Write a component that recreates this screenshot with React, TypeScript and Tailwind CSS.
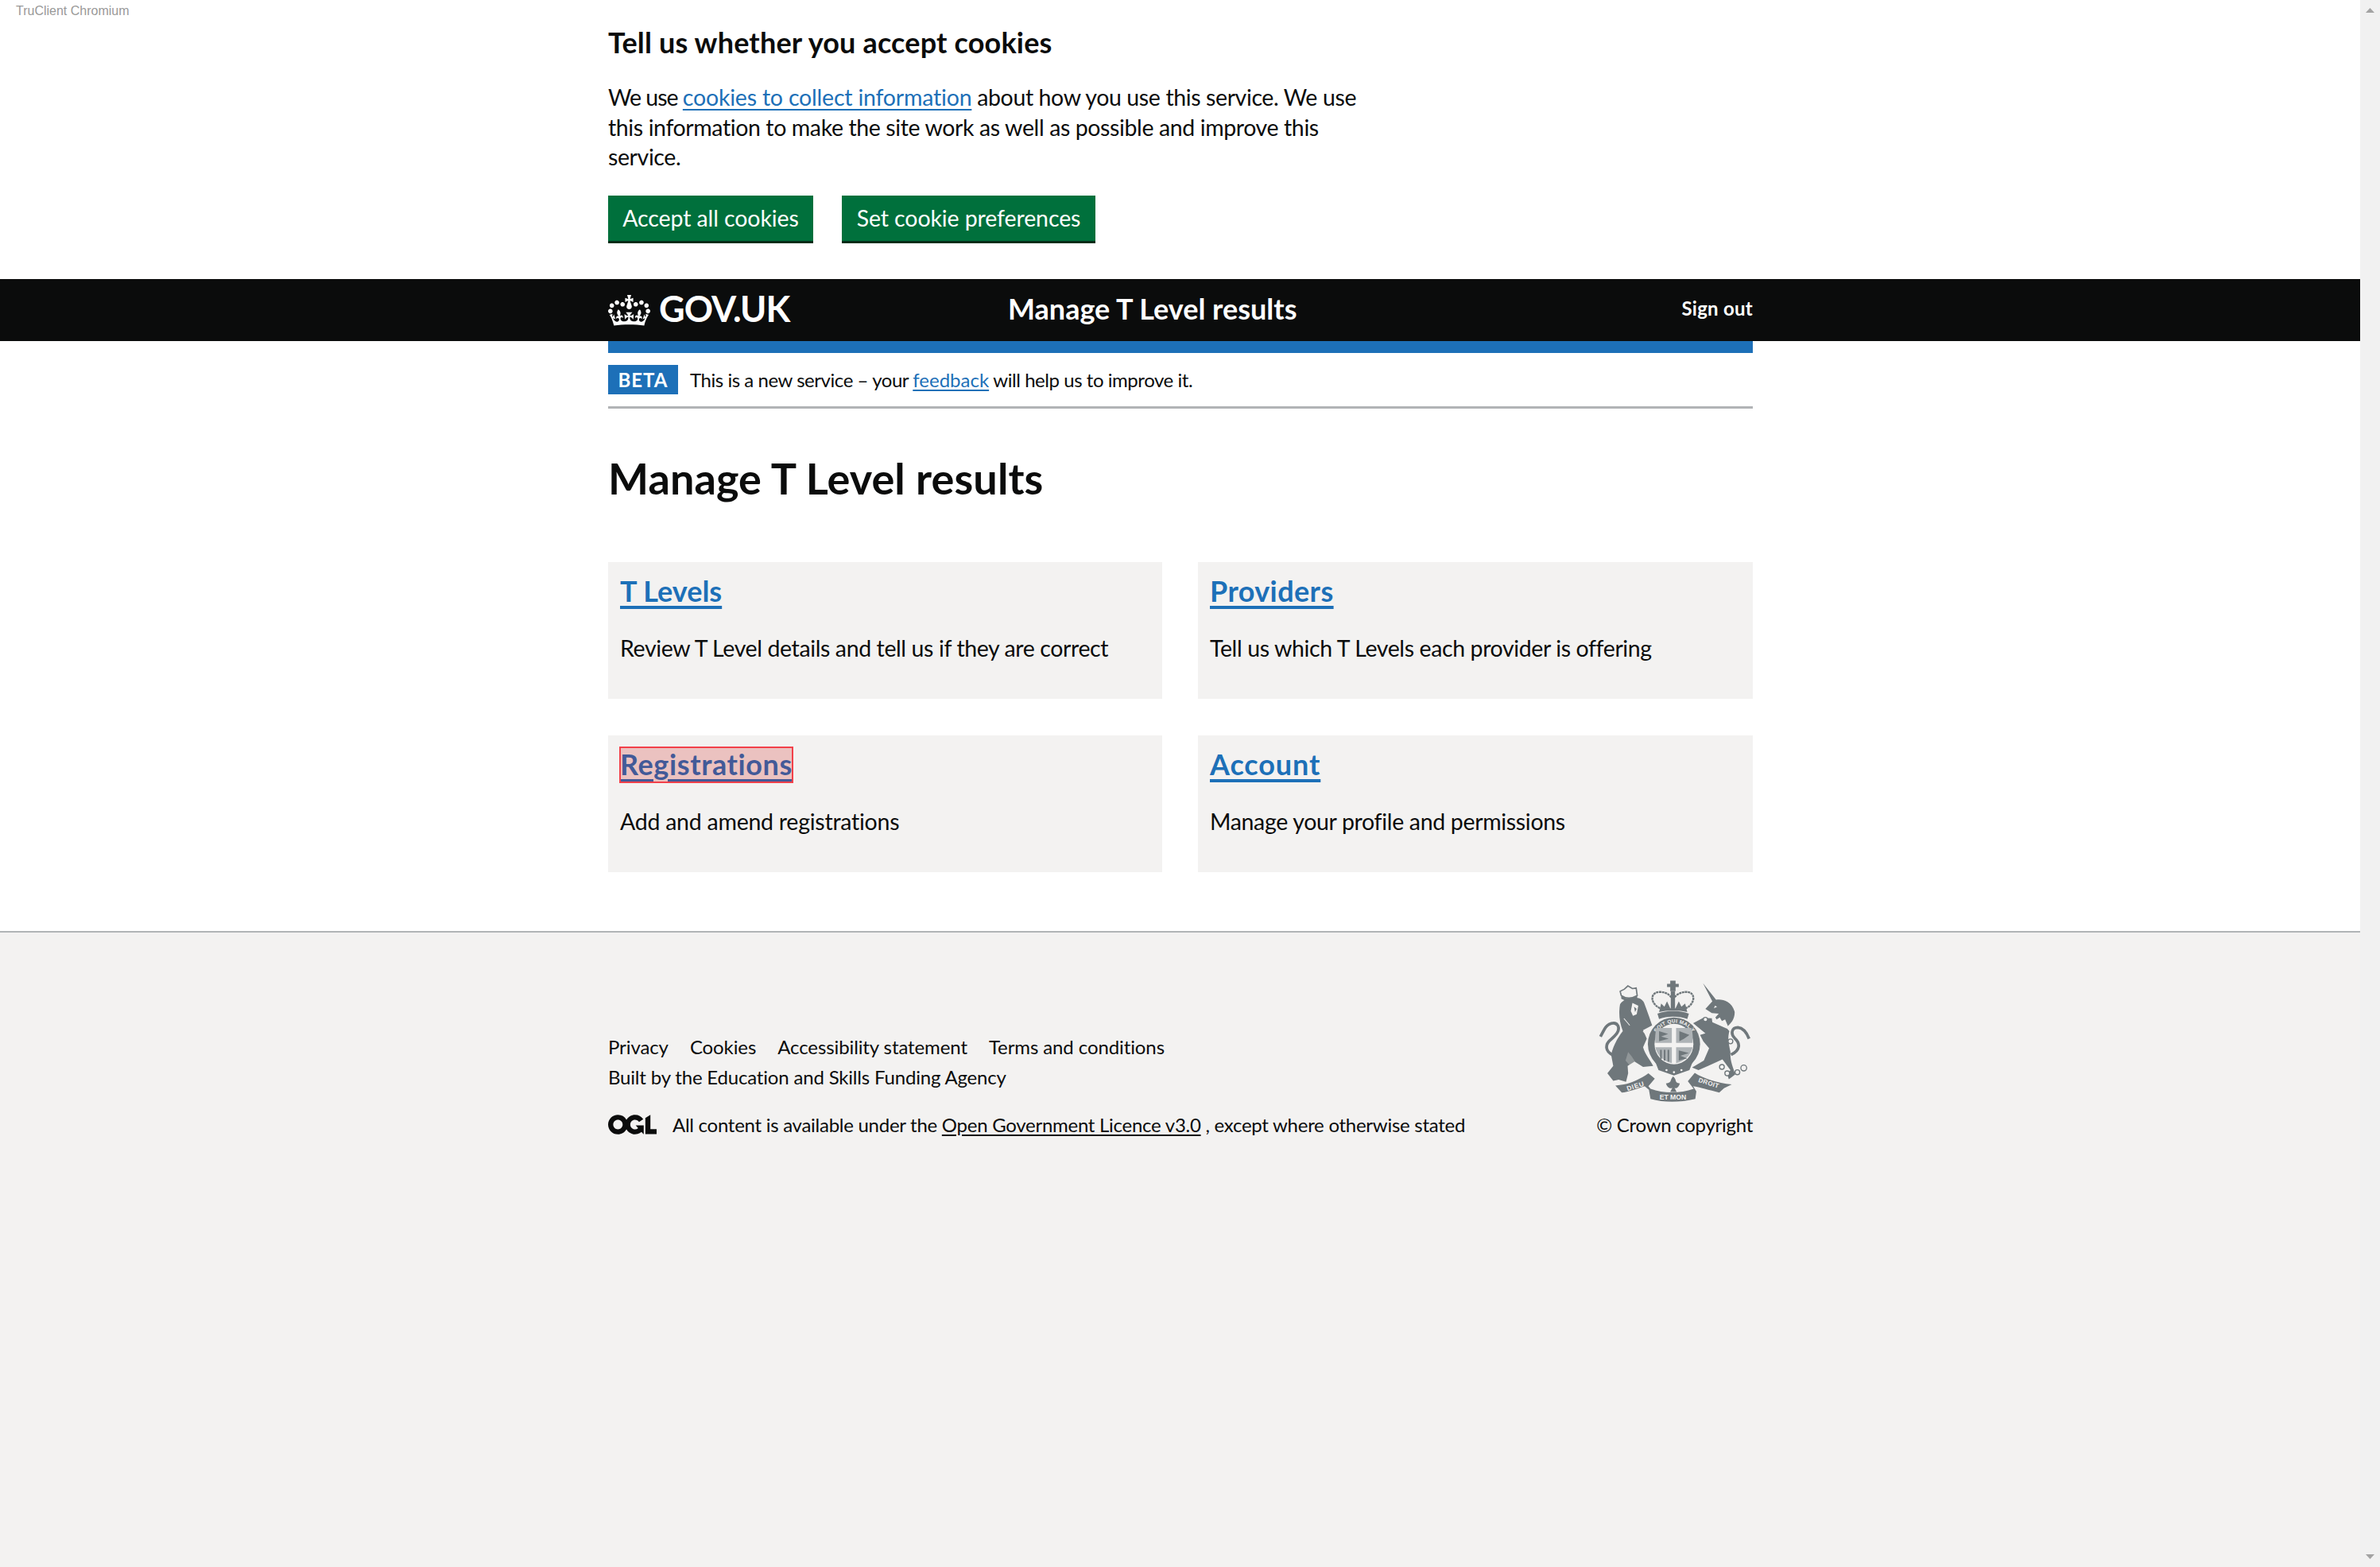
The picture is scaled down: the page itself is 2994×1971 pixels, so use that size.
import React from "react";

const sans = "font-['Lato','Noto_Sans',sans-serif]";

function Crown({ className }: { className?: string }) {
  return (
    <svg viewBox="0 0 132 97" className={className} fill="currentColor">
      <path fillRule="evenodd" d="M25 30.2c3.5 1.5 7.7-.2 9.1-3.7 1.5-3.6-.2-7.8-3.9-9.2-3.6-1.4-7.6.3-9.1 3.9-1.4 3.5.3 7.5 3.9 9zM9 39.5c3.6 1.5 7.8-.2 9.2-3.7 1.5-3.6-.2-7.8-3.9-9.1-3.6-1.5-7.6.2-9.1 3.8-1.4 3.5.3 7.5 3.8 9zM4.4 57.2c3.5 1.5 7.7-.2 9.1-3.8 1.5-3.6-.2-7.7-3.9-9.1-3.5-1.5-7.6.3-9.1 3.8-1.4 3.5.3 7.6 3.9 9.1zm38.3-21.4c3.5 1.5 7.7-.2 9.1-3.8 1.5-3.6-.2-7.7-3.9-9.1-3.6-1.5-7.6.3-9.1 3.8-1.3 3.6.4 7.7 3.9 9.1zm64.4-5.6c-3.6 1.5-7.8-.2-9.1-3.7-1.5-3.6.2-7.8 3.8-9.2 3.6-1.4 7.7.3 9.2 3.9 1.3 3.5-.4 7.5-3.9 9zm15.9 9.3c-3.6 1.5-7.7-.2-9.1-3.7-1.5-3.6.2-7.8 3.7-9.1 3.6-1.5 7.7.2 9.2 3.8 1.5 3.5-.3 7.5-3.8 9zm4.7 17.7c-3.6 1.5-7.8-.2-9.2-3.8-1.5-3.6.2-7.7 3.9-9.1 3.6-1.5 7.7.3 9.2 3.8 1.3 3.5-.4 7.6-3.9 9.1zM89.3 35.8c-3.6 1.5-7.8-.2-9.2-3.8-1.4-3.6.2-7.7 3.9-9.1 3.6-1.5 7.7.3 9.2 3.8 1.4 3.6-.3 7.7-3.9 9.1zM69.7 17.7l8.9 4.7V9.3l-8.9 2.8c-.2-.3-.5-.6-.9-.9L72.4 0H59.6l3.5 11.2c-.3.3-.6.5-.9.9l-8.8-2.8v13.1l8.8-4.7c.3.3.6.7.9.9l-5 15.4v.1c-.2.8-.4 1.6-.4 2.4 0 4.1 3.1 7.5 7 8.1h.2c.3 0 .7.1 1 .1.4 0 .7 0 1-.1h.2c4-.6 7.1-4.1 7.1-8.1 0-.8-.1-1.7-.4-2.4V34l-5.1-15.4c.4-.2.7-.6 1-.9zM66 92.8c16.9 0 32.8 1.1 47.1 3.2 4-16.9 8.9-26.7 14-33.5l-9.6-3.4c1 4.9 1.1 7.2 0 10.2-1.5-1.4-3-4.3-4.2-8.7L108.6 76c2.8-2 5-3.2 7.5-3.3-4.4 9.4-10 11.9-13.6 11.2-4.3-.8-6.3-4.6-5.6-7.9 1-4.7 5.7-5.9 8-.5 4.3-8.7-3-11.4-7.6-8.8 7.1-7.2 7.9-13.5 2.1-21.1-8 6.1-8.1 12.3-4.5 20.8-4.7-5.4-12.1-2.5-9.5 6.2 3.4-5.2 7.9-2 7.2 3.1-.6 4.3-6.4 7.8-13.5 7.2-10.3-.9-10.9-8-11.2-13.8 2.5-.5 7.1 1.8 11 7.3L80.2 60c-4.1 4.4-8 5.3-12.3 5.4 1.4-4.4 8-11.6 8-11.6H55.5s6.4 7.2 7.9 11.6c-4.2-.1-8-1-12.3-5.4l1.4 16.4c3.9-5.5 8.5-7.7 10.9-7.3-.3 5.8-.9 12.8-11.1 13.8-7.2.6-12.9-2.9-13.5-7.2-.7-5 3.8-8.3 7.1-3.1 2.7-8.7-4.6-11.6-9.4-6.2 3.7-8.5 3.6-14.7-4.6-20.8-5.8 7.6-5 13.9 2.2 21.1-4.7-2.6-11.9.1-7.7 8.8 2.3-5.5 7.1-4.2 8.1.5.7 3.3-1.3 7.1-5.7 7.9-3.5.7-9-1.8-13.5-11.2 2.5.1 4.7 1.3 7.5 3.3l-4.7-15.4c-1.2 4.4-2.7 7.2-4.3 8.7-1.1-3-.9-5.3 0-10.2l-9.5 3.4c5 6.9 9.9 16.7 14 33.5 14.8-2.1 30.8-3.2 47.7-3.2z" />
    </svg>
  );
}

function Ogl({ className }: { className?: string }) {
  return (
    <svg viewBox="0 0 483.2 195.7" className={className} fill="currentColor">
      <path d="M421.5 142.8V.1l-50.7 32.3v161.1h112.4v-50.7zm-122.3-9.6A47.12 47.12 0 0 1 221 97.8c0-26 21.1-47.1 47.1-47.1 16.7 0 31.4 8.7 39.7 21.8l42.7-27.2A97.63 97.63 0 0 0 268.1 0c-36.5 0-68.3 20.1-85.1 49.7A98 98 0 0 0 97.8 0C43.9 0 0 43.9 0 97.8s43.9 97.8 97.8 97.8c36.5 0 68.3-20.1 85.1-49.7a97.76 97.76 0 0 0 149.6 25.4l19.4 22.2h3v-87.8h-80l24.3 27.5zM97.8 145c-26 0-47.1-21.1-47.1-47.1s21.1-47.1 47.1-47.1 47.2 21 47.2 47S123.8 145 97.8 145" />
    </svg>
  );
}

function Crest({ className }: { className?: string }) {
  const c = "#6f777b";
  const bg = "#f3f2f1";
  const f = "Liberation Sans, sans-serif";
  return (
    <svg viewBox="95 65 570 465" className={className}>
      {/* lion */}
      <path fill={c} d="M176 160 C190 136 252 122 266 156 C276 182 284 205 296 240 L262 258 L276 290 L262 322 C270 350 290 372 300 392 L262 396 L230 376 L204 392 L206 420 L198 452 L170 444 L150 448 L128 420 L150 392 L142 350 C150 315 168 285 186 262 C172 225 170 190 176 158 Z" />
      <path fill={bg} d="M206 340 C220 356 226 366 232 376 L214 392 L196 372 Z" opacity=".25" />
      <path fill="none" stroke={c} strokeWidth="11" d="M150 352 C118 338 120 312 138 296 C160 276 176 262 168 242 C158 222 128 232 116 256 L102 282" />
      <path fill={bg} d="M222 156 L244 166 L238 198 L224 204 L216 186 Z" />
      <path fill={c} d="M228 170 L238 178 L232 190 Z" />
      <path fill="none" stroke={bg} strokeWidth="3" d="M262 262 L300 300 M190 214 L212 240" />
      <path fill="none" stroke={c} strokeWidth="5" d="M180 128 L176 112 L192 104 L205 92 L222 102 L236 100 L240 128 C220 140 196 140 180 128 Z" />
      <path fill={c} d="M180 128 C196 142 222 142 240 128 L240 140 C220 150 196 150 180 140 Z" />
      {/* unicorn */}
      <path fill={c} d="M487 82 L536 144 C560 140 596 150 606 190 C606 220 590 234 574 248 L586 262 C578 290 584 310 590 340 C588 372 598 392 608 424 L584 442 L578 424 L590 408 L560 368 L506 392 L470 408 L446 398 L490 372 L510 326 L488 300 L476 276 L496 270 L450 232 L488 212 L530 214 L546 196 L520 194 L496 178 L522 150 Z" />
      <path fill="none" stroke={c} strokeWidth="11" d="M592 350 C630 332 626 306 606 288 C590 272 594 248 618 248 C640 250 652 270 660 290" />
      <circle cx="558" cy="396" r="9" fill={bg} stroke={c} strokeWidth="4" />
      <circle cx="578" cy="420" r="9" fill={bg} stroke={c} strokeWidth="4" />
      <circle cx="616" cy="416" r="9" fill={bg} stroke={c} strokeWidth="4" />
      <circle cx="640" cy="400" r="11" fill={bg} stroke={c} strokeWidth="4" />
      <circle cx="590" cy="300" r="9" fill={bg} stroke={c} strokeWidth="4" />
      <path fill={bg} d="M520 214 L530 204 L538 218 L550 210 L558 224 L570 218 L582 246 L576 252 L522 228 Z" />
      <circle cx="496" cy="218" r="8" fill={bg} stroke={c} strokeWidth="4" />
      <path fill={bg} d="M532 166 L540 170 L528 176 Z" />
      {/* top crown */}
      <path fill={c} d="M364 72 H384 V84 H396 V96 H384 V112 H364 V96 H352 V84 H364 Z" />
      <path fill="none" stroke={c} strokeWidth="7" strokeDasharray="9 2" d="M326 176 C288 158 288 118 320 115 C345 112 365 125 374 145 C383 125 405 112 430 115 C460 118 458 160 422 176" />
      <path fill={c} d="M366 112 H382 V178 H366 Z M330 158 L342 170 L352 150 L364 176 H384 L396 150 L406 170 L420 158 L428 190 C400 182 350 182 322 190 Z" />
      <path fill={c} d="M316 196 C350 182 400 182 434 196 L428 216 C400 204 350 204 322 216 Z" />
      {/* garter and shield */}
      <ellipse cx="378" cy="310" rx="98" ry="100" fill={c} />
      <ellipse cx="378" cy="310" rx="73" ry="76" fill={bg} />
      <path id="garter-path" fill="none" d="M300 345 A84 88 0 1 1 460 345" />
      <text fontSize="19" fontWeight="700" fill={bg} fontFamily={f} letterSpacing="1">
        <textPath href="#garter-path" startOffset="50%" textAnchor="middle">SOIT QUI MAL Y</textPath>
      </text>
      <path fill="#aeb3b6" d="M312 250 H370 V306 H308 C306 286 308 268 312 250 Z M386 250 H444 C448 268 450 286 448 306 H386 Z M308 322 H370 V382 C340 374 316 356 308 322 Z M386 322 H448 C440 356 416 374 386 382 Z" />
      <path fill={c} d="M322 262 L356 272 L330 282 L358 290 L322 300 Z M396 334 L434 344 L402 354 L428 364 L396 372 Z M398 262 L436 276 L416 290 L398 300 Z M326 332 H332 V366 H326 Z M340 332 H346 V372 H340 Z M354 332 H360 V376 H354 Z" />
      <path fill={c} d="M306 372 L378 404 L450 372 L436 408 L378 428 L320 408 Z" />
      <circle cx="350" cy="408" r="4" fill={bg} />
      <circle cx="378" cy="416" r="4" fill={bg} />
      <circle cx="406" cy="408" r="4" fill={bg} />
      {/* fleur de lis */}
      <path fill={c} d="M375 432 C392 446 376 454 400 458 C396 472 388 480 380 474 L388 490 H364 L372 474 C362 480 352 472 348 458 C374 454 360 446 375 432 Z" />
      {/* ribbon */}
      <path fill={c} d="M158 466 L190 462 C220 456 255 440 282 420 L306 440 L282 468 L290 478 C340 496 400 496 452 478 L430 450 L456 418 C490 440 540 455 595 462 L566 476 L548 492 C510 482 474 472 450 468 L462 488 L458 516 C400 530 340 530 290 516 L284 482 L268 468 C240 478 205 490 182 492 Z" />
      <text x="236" y="476" textAnchor="middle" fontSize="25" fontWeight="700" fill={bg} fontFamily={f} transform="rotate(-18 236 476)" letterSpacing="2">DIEU</text>
      <text x="374" y="519" textAnchor="middle" fontSize="26" fontWeight="700" fill={bg} fontFamily={f}>ET MON</text>
      <text x="506" y="464" textAnchor="middle" fontSize="24" fontWeight="700" fill={bg} fontFamily={f} transform="rotate(18 506 464)" letterSpacing="1">DROIT</text>
    </svg>
  );
}

function Card({ title, text, highlighted, titleClass, textClass }: { title: string; text: string; highlighted?: boolean; titleClass?: string; textClass?: string }) {
  return (
    <div className="h-[172px] bg-[#f3f2f1] px-[15px] pt-[14px]">
      <h2 className={`m-0 h-[45px] text-[36px] leading-[45px] font-bold ${titleClass ?? ""}`}>
        {highlighted ? (
          <a className="relative inline-block text-[#005eb8] underline decoration-[4px] underline-offset-[5px]">
            {title}
            <span className="absolute -left-[1px] -right-[1px] top-0 -bottom-[1px] border-2 border-[#f2414a] bg-[#d9534f]/30" />
          </a>
        ) : (
          <a className="text-[#1d70b8] underline decoration-[4px] underline-offset-[5px]">{title}</a>
        )}
      </h2>
      <p className={`m-0 mt-[31px] text-[28.5px] leading-[37px] text-[#0b0c0c] ${textClass ?? "tracking-[-0.39px]"}`}>{text}</p>
    </div>
  );
}

export default function App() {
  return (
    <div className={`relative flex h-[1971px] w-full overflow-hidden bg-white text-[#0b0c0c] ${sans}`}>
      <div className="absolute left-[20px] top-[5px] font-['Liberation_Sans',sans-serif] text-[16px] leading-[18px] text-[#999999]">TruClient Chromium</div>

      <div className="flex min-w-0 flex-1 flex-col">
        {/* cookie banner */}
        <section className="h-[351px] pl-[765px] pt-[32px]">
          <div className="w-[960px]">
            <h2 className="m-0 text-[36px] leading-[42px] font-bold tracking-[0.17px]">Tell us whether you accept cookies</h2>
            <p className="m-0 mt-[30px] text-[28.5px] leading-[37.5px] tracking-[-0.39px]">
              <span className="tracking-[-1px]">We use </span><a className="tracking-[-0.2px] text-[#1d70b8] underline decoration-2 underline-offset-[4px]">cookies to collect information</a> about how you use this service. We use this information to make the site work as well as possible and improve this service.
            </p>
            <div className="mt-[29px] flex gap-[36px]">
              <button className="h-[60px] w-[258px] border-b-[3px] border-[#002d18] bg-[#00703c] text-[28.5px] leading-[37px] tracking-[-0.1px] text-white">Accept all cookies</button>
              <button className="h-[60px] w-[319px] border-b-[3px] border-[#002d18] bg-[#00703c] text-[28.5px] leading-[37px] tracking-[-0.1px] text-white">Set cookie preferences</button>
            </div>
          </div>
        </section>

        {/* header */}
        <header className="flex h-[78px] items-center bg-[#0b0c0c] pl-[765px] text-white">
          <div className="flex w-[1440px] items-center">
            <Crown className="h-[39px] w-[53px]" />
            <span className="ml-[11px] mt-[-5px] w-[439px] text-[45px] leading-[50px] font-bold tracking-[-1px]">GOV.UK</span>
            <span className="mt-[-3px] w-[846px] text-[36px] leading-[45px] font-bold">Manage T Level results</span>
            <span className="ml-auto mt-[-4px] text-[24px] leading-[30px] font-bold tracking-[0.25px]">Sign out</span>
          </div>
        </header>

        {/* main */}
        <main className="ml-[765px] h-[742px] w-[1440px]">
          <div className="h-[15px] bg-[#1d70b8]" />
          <div className="flex h-[70px] items-start border-b-[3px] border-[#b1b4b6] pt-[15px]">
            <strong className="flex h-[37px] w-[88px] items-center justify-center bg-[#1d70b8] text-[24px] font-bold tracking-[1px] text-white">BETA</strong>
            <p className="m-0 ml-[15px] text-[24px] leading-[37px] tracking-[-0.45px]">
              This is a new service – your <a className="tracking-[0px] text-[#1d70b8] underline decoration-2 underline-offset-[3px]">feedback</a> will help us to improve it.
            </p>
          </div>
          <h1 className="m-0 mt-[54px] text-[54px] leading-[68px] font-bold tracking-[0.1px]">Manage T Level results</h1>
          <div className="mt-[71px] grid grid-cols-[697px_698px] gap-x-[45px] gap-y-[46px]">
            <Card title="T Levels" text="Review T Level details and tell us if they are correct" />
            <Card title="Providers" text="Tell us which T Levels each provider is offering" titleClass="tracking-[0.4px]" />
            <Card title="Registrations" text="Add and amend registrations" highlighted titleClass="tracking-[0.6px]" textClass="tracking-[-0.25px]" />
            <Card title="Account" text="Manage your profile and permissions" titleClass="tracking-[0.9px]" textClass="tracking-[-0.33px]" />
          </div>
        </main>

        {/* footer */}
        <footer className="flex-1 border-t-2 border-[#b1b4b6] bg-[#f3f2f1] pl-[765px] pt-[60px]">
          <div className="flex w-[1440px] items-start justify-between text-[24px] leading-[37px] tracking-[-0.27px]">
            <div className="pt-[65px]">
              <ul className="m-0 flex list-none gap-[27px] p-0 tracking-[-0.1px]">
                <li>Privacy</li>
                <li>Cookies</li>
                <li>Accessibility statement</li>
                <li>Terms and conditions</li>
              </ul>
              <div className="mt-[1px] tracking-[-0.18px]">Built by the Education and Skills Funding Agency</div>
              <div className="mt-[23px] flex items-center">
                <Ogl className="h-[25px] w-[61px]" />
                <span className="ml-[20px]">
                  All content is available under the <a className="underline underline-offset-[3px]">Open Government Licence v3.0</a> , except where otherwise stated
                </span>
              </div>
            </div>
            <div className="flex flex-col items-end">
              <Crest className="mr-[3px] mt-[-2px] h-[156px] w-[191px]" />
              <div className="mt-[9px]">© Crown copyright</div>
            </div>
          </div>
        </footer>
      </div>

      {/* scrollbar */}
      <div className="flex w-[25px] flex-col items-center justify-between bg-[#f1f1f1] pb-[10px] pt-[10px]">
        <svg viewBox="0 0 11 6" className="h-[6px] w-[11px]"><path d="M5.5 0 L11 6 H0 Z" fill="#a3a3a3" /></svg>
        <svg viewBox="0 0 11 6" className="h-[6px] w-[11px]"><path d="M0 0 H11 L5.5 6 Z" fill="#a3a3a3" /></svg>
      </div>
    </div>
  );
}
